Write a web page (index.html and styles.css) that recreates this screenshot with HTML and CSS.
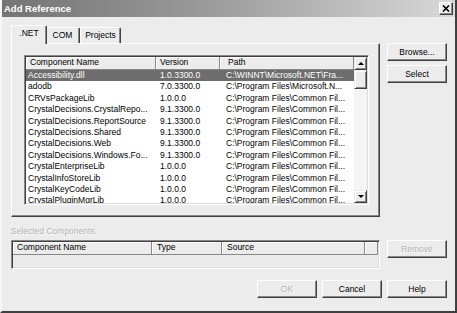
FILE: index.html
```html
<!DOCTYPE html>
<html lang="en">
<head>
  <meta charset="UTF-8"/>
  <title>Add Reference</title>
  <link rel="stylesheet" href="styles.css">
</head>
<body>
  <div class="window">
    <div class="titlebar">
      <span class="caption">Add Reference</span>
      <button class="close-btn" title="Close">
        <svg width="8" height="7" viewBox="0 0 8 7"><path d="M1 0.5 L7 6.5 M7 0.5 L1 6.5" stroke="#000" stroke-width="1.6"/></svg>
      </button>
    </div>

    <div class="main">
      <div class="tabs">
        <div class="tab tab-net active">.NET</div>
        <div class="tab tab-com">COM</div>
        <div class="tab tab-proj">Projects</div>
      </div>

      <div class="side-top">
        <button class="btn">Browse...</button>
        <button class="btn">Select</button>
      </div>

      <div class="page">
        <div class="listbox">
          <div class="lb-content">
            <div class="lb-row lb-head">
              <div class="hcell">Component Name</div>
              <div class="hcell">Version</div>
              <div class="hcell">Path</div>
            </div>
            <div class="lb-row selected"><div>Accessibility.dll</div><div>1.0.3300.0</div><div>C:\WINNT\Microsoft.NET\Fra...</div></div>
            <div class="lb-row"><div>adodb</div><div>7.0.3300.0</div><div>C:\Program Files\Microsoft.N...</div></div>
            <div class="lb-row"><div>CRVsPackageLib</div><div>1.0.0.0</div><div>C:\Program Files\Common Fil...</div></div>
            <div class="lb-row"><div>CrystalDecisions.CrystalRepo...</div><div>9.1.3300.0</div><div>C:\Program Files\Common Fil...</div></div>
            <div class="lb-row"><div>CrystalDecisions.ReportSource</div><div>9.1.3300.0</div><div>C:\Program Files\Common Fil...</div></div>
            <div class="lb-row"><div>CrystalDecisions.Shared</div><div>9.1.3300.0</div><div>C:\Program Files\Common Fil...</div></div>
            <div class="lb-row"><div>CrystalDecisions.Web</div><div>9.1.3300.0</div><div>C:\Program Files\Common Fil...</div></div>
            <div class="lb-row"><div>CrystalDecisions.Windows.Fo...</div><div>9.1.3300.0</div><div>C:\Program Files\Common Fil...</div></div>
            <div class="lb-row"><div>CrystalEnterpriseLib</div><div>1.0.0.0</div><div>C:\Program Files\Common Fil...</div></div>
            <div class="lb-row"><div>CrystalInfoStoreLib</div><div>1.0.0.0</div><div>C:\Program Files\Common Fil...</div></div>
            <div class="lb-row"><div>CrystalKeyCodeLib</div><div>1.0.0.0</div><div>C:\Program Files\Common Fil...</div></div>
            <div class="lb-row"><div>CrystalPluginMgrLib</div><div>1.0.0.0</div><div>C:\Program Files\Common Fil...</div></div>
          </div>
          <div class="vscroll">
            <div class="sb-btn"><span class="arrow-up"></span></div>
            <div class="sb-thumb"></div>
            <div class="sb-track"></div>
            <div class="sb-btn"><span class="arrow-down"></span></div>
          </div>
        </div>
      </div>

      <div class="sel-label">Selected Components:</div>

      <div class="listview">
        <div class="lv-head">
          <div class="hcell">Component Name</div>
          <div class="hcell">Type</div>
          <div class="hcell">Source</div>
          <div class="hcell"></div>
        </div>
      </div>

      <div class="side-bottom">
        <button class="btn" disabled>Remove</button>
      </div>
    </div>

    <div class="footer">
      <button class="btn" disabled>OK</button>
      <button class="btn">Cancel</button>
      <button class="btn">Help</button>
    </div>
  </div>
</body>
</html>
```

FILE: styles.css
```css
:root { --face:#ececec; --light:#fff; --shadow:#888; --dark:#404040; --sel:#6d6d6d; --dis:#b4b4b4; }
*{box-sizing:border-box;margin:0;padding:0;}
body{width:457px;height:313px;overflow:hidden;background:var(--face);font-family:"Liberation Sans",Arial,sans-serif;font-size:8.5px;color:#000;}

.window{width:457px;height:313px;background:var(--face);border-left:2px solid #f6f6f6;border-right:2px solid var(--dark);border-bottom:2px solid var(--dark);display:flex;flex-direction:column;}

.titlebar{height:17px;display:flex;align-items:center;justify-content:space-between;padding:0 2px 0 2px;background:linear-gradient(to right,#747474,#9a9a9a 45%,#d8d8d8);}
.caption{color:#fff;font-weight:bold;font-size:9.5px;}
.close-btn{width:14px;height:13px;display:flex;align-items:center;justify-content:center;background:var(--face);border:1px solid;border-color:var(--light) var(--dark) var(--dark) var(--light);box-shadow:inset -1px -1px 0 var(--shadow);}

.main{display:grid;grid-template-columns:369px 60px;grid-template-rows:18px 174px 23px 29px;column-gap:7px;padding:8px 0 0 9px;}

/* tabs */
.tabs{grid-column:1;grid-row:1;display:flex;align-items:flex-end;padding-left:2px;position:relative;z-index:1;}
.tab{height:16px;line-height:14px;text-align:center;border:1px solid;border-bottom:none;border-color:var(--light) var(--dark) transparent var(--light);box-shadow:inset -1px 0 0 var(--shadow);border-radius:2px 2px 0 0;background:var(--face);}
.tab-net{width:32px;}
.tab-com{width:35px;}
.tab-proj{width:41px;}
.tab.active{width:36px;height:19px;line-height:15px;margin:0 -2px -1px -2px;position:relative;z-index:2;}

.page{grid-column:1;grid-row:2;border:1px solid;border-color:var(--light) var(--dark) var(--dark) var(--light);box-shadow:inset -1px -1px 0 var(--shadow);padding:11px 10px 11px 12px;}

/* list box */
.listbox{height:150px;display:flex;background:#fff;border:1px solid;border-color:var(--shadow) var(--light) var(--light) var(--shadow);box-shadow:inset 1px 1px 0 var(--dark),inset -1px -1px 0 #dcdcdc;padding:1px;}
.lb-content{flex:1;overflow:hidden;}
.lb-row{display:grid;grid-template-columns:130px 64px 134px;height:11.4px;line-height:11.4px;white-space:nowrap;}
.lb-row div{overflow:hidden;}
.lb-row div:nth-child(1){padding-left:2px;}
.lb-row div:nth-child(2){padding-left:4px;}
.lb-row div:nth-child(3){padding-left:6px;}
.lb-row.selected{background:var(--sel);color:#fff;}
.lb-row.lb-head{height:13px;line-height:11px;}
.hcell{background:var(--face);border-right:1px solid var(--shadow);border-bottom:1px solid var(--shadow);box-shadow:inset 1px 1px 0 var(--light);white-space:nowrap;}
.lb-head .hcell:nth-child(1){padding-left:4px;}
.lb-head .hcell:nth-child(2){padding-left:4px;}
.lb-head .hcell:nth-child(3){padding-left:8px;}

.vscroll{width:13px;display:flex;flex-direction:column;}
.sb-btn,.sb-thumb{background:var(--face);border:1px solid;border-color:var(--face) var(--dark) var(--dark) var(--face);box-shadow:inset 1px 1px 0 var(--light),inset -1px -1px 0 var(--shadow);}
.sb-btn{height:13px;display:flex;align-items:center;justify-content:center;}
.sb-thumb{height:19px;}
.sb-track{flex:1;background:#f4f4f4;}
.arrow-up{width:0;height:0;border-left:3px solid transparent;border-right:3px solid transparent;border-bottom:3px solid #000;}
.arrow-down{width:0;height:0;border-left:3px solid transparent;border-right:3px solid transparent;border-top:3px solid #000;}

.sel-label{grid-column:1;grid-row:3;padding-top:8px;line-height:12px;color:var(--dis);text-shadow:1px 1px 0 #fafafa;}

.listview{grid-column:1;grid-row:4;background:#ebebeb;border:1px solid;border-color:var(--shadow) var(--light) var(--light) var(--shadow);box-shadow:inset 1px 1px 0 var(--dark),inset -1px -1px 0 #dcdcdc;padding:1px;}
.lv-head{display:grid;grid-template-columns:139px 70px 143px 1fr;height:13px;line-height:11px;}
.lv-head .hcell{padding-left:5px;}
.lv-head .hcell:first-child{padding-left:4px;}

/* buttons */
.side-top{grid-column:2;grid-row:1 / 3;padding-top:18px;display:flex;flex-direction:column;gap:4px;}
.side-bottom{grid-column:2;grid-row:4;}
.btn{width:60px;height:18px;font-family:inherit;font-size:8.5px;color:#000;background:var(--face);border:1px solid;border-color:var(--light) var(--dark) var(--dark) var(--light);box-shadow:inset -1px -1px 0 var(--shadow);}
.btn:disabled{color:var(--dis);text-shadow:1px 1px 0 #fafafa;}

.footer{display:flex;justify-content:flex-end;gap:5px;padding:11px 8px 0 0;}
```
